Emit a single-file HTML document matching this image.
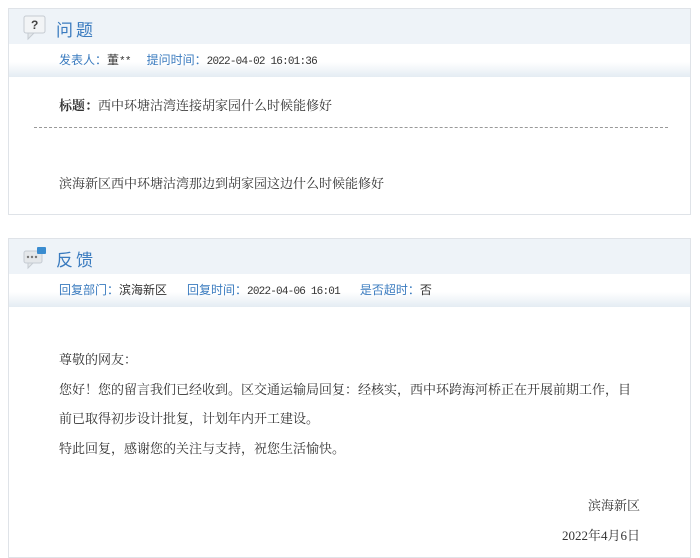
<!DOCTYPE html>
<html><head><meta charset="utf-8"><style>
*{margin:0;padding:0;box-sizing:border-box}
body{width:700px;height:553px;background:#fff;font-family:"Liberation Sans","Noto Sans CJK SC",sans-serif;font-size:12px;color:#333;position:relative;overflow:hidden}
.box{position:absolute;left:8px;width:683px;border:1px solid #dfe3e8;background:#fff}
.hd{height:35px;background:#eef3f8;position:relative}
.hd .t{position:absolute;left:47px;top:7px;font-size:17px;color:#3a7bbf;letter-spacing:3px}
.info{height:33px;background:linear-gradient(#fff 0%,#fff 55%,#e4ecf3 100%);position:relative;padding-left:50px;line-height:32px;font-size:12px}
.info .k{color:#3a7bbf}
.info .v{color:#333;font-family:"Liberation Mono","Noto Sans CJK SC",monospace;font-size:11px;letter-spacing:-0.8px}
.serif{font-family:"Liberation Serif","Noto Serif CJK SC",serif;font-size:13px;color:#333;position:absolute}
</style></head><body>
<div class="box" style="top:8px;height:207px">
 <div class="hd">
  <svg style="position:absolute;left:14px;top:6px" width="24" height="26"><rect x="1" y="1" width="21" height="17" rx="2" fill="#f2f4f6" stroke="#c5cbd2"/><path d="M5 18 L5 24 L11 18Z" fill="#e3e7eb" stroke="#c5cbd2"/><text x="8" y="14" font-size="12" font-weight="bold" fill="#444" font-family="Liberation Sans">?</text></svg>
  <div class="t">问题</div>
 </div>
 <div class="info"><span class="k">发表人：</span><span style="font-size:12px">董</span><span class="v">**</span><span class="k" style="margin-left:16px">提问时间：</span><span class="v">2022-04-02 16:01:36</span></div>
 <div class="serif" style="left:50px;top:86px"><b>标题：</b>西中环塘沽湾连接胡家园什么时候能修好</div>
 <div style="position:absolute;left:25px;top:118px;width:634px;border-top:1px dashed #999"></div>
 <div class="serif" style="left:50px;top:164px">滨海新区西中环塘沽湾那边到胡家园这边什么时候能修好</div>
</div>
<div class="box" style="top:238px;height:320px">
 <div class="hd">
  <svg style="position:absolute;left:14px;top:7px" width="26" height="24"><rect x="1" y="5" width="18" height="12" rx="2" fill="#e4e7ea" stroke="#c5cbd2"/><path d="M5 17 L5 22 L10 17Z" fill="#e4e7ea" stroke="#c5cbd2"/><circle cx="5" cy="11" r="1.2" fill="#777"/><circle cx="9" cy="11" r="1.2" fill="#777"/><circle cx="13" cy="11" r="1.2" fill="#777"/><rect x="14" y="1" width="9" height="7" rx="1" fill="#3a8cd0"/></svg>
  <div class="t">反馈</div>
 </div>
 <div class="info"><span class="k">回复部门：</span><span>滨海新区</span><span class="k" style="margin-left:20px">回复时间：</span><span class="v">2022-04-06 16:01</span><span class="k" style="margin-left:20px">是否超时：</span><span>否</span></div>
 <div class="serif" style="left:50px;top:106px;line-height:29.7px;width:578px">尊敬的网友：<br>您好！您的留言我们已经收到。区交通运输局回复：经核实，西中环跨海河桥正在开展前期工作，目前已取得初步设计批复，计划年内开工建设。<br>特此回复，感谢您的关注与支持，祝您生活愉快。</div>
 <div class="serif" style="right:50px;top:256px">滨海新区</div>
 <div class="serif" style="right:50px;top:286px">2022年4月6日</div>
</div>
</body></html>
